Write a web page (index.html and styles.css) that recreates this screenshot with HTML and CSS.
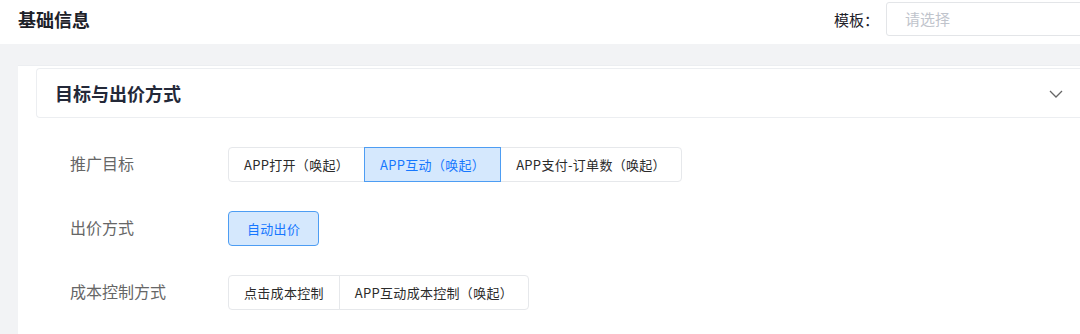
FILE: index.html
```html
<!DOCTYPE html>
<html lang="zh-CN">
<head>
  <meta charset="UTF-8">
  <meta name="viewport" content="width=device-width, initial-scale=1">
  <title>基础信息</title>
  <link rel="stylesheet" href="styles.css">
</head>
<body>

  <!-- 顶部栏 -->
  <div class="topbar">
    <div class="page-title">基础信息</div>
    <div class="template">
      <span class="template-label">模板：</span>
      <div class="select">请选择</div>
    </div>
  </div>

  <div class="main">
    <div class="card">
      <div class="panel-header">
        <span class="panel-title">目标与出价方式</span>
        <svg class="chevron" width="14" height="8" viewBox="0 0 14 8">
          <polyline points="1,1 7,7 13,1" fill="none" stroke="#666" stroke-width="1.3"/>
        </svg>
      </div>

      <div class="form">
        <div class="form-row">
          <div class="form-label">推广目标</div>
          <div class="seg">
            <div class="seg-btn">APP打开（唤起）</div>
            <div class="seg-btn active">APP互动（唤起）</div>
            <div class="seg-btn">APP支付-订单数（唤起）</div>
          </div>
        </div>
        <div class="form-row">
          <div class="form-label">出价方式</div>
          <div class="seg">
            <div class="seg-btn single active">自动出价</div>
          </div>
        </div>
        <div class="form-row">
          <div class="form-label">成本控制方式</div>
          <div class="seg">
            <div class="seg-btn">点击成本控制</div>
            <div class="seg-btn">APP互动成本控制（唤起）</div>
          </div>
        </div>
      </div>
    </div>
  </div>

</body>
</html>
```

FILE: styles.css
```css
html, body {
  overflow: hidden;
}
body {
  margin: 0;
  background: #f2f3f5;
  font-family: "Noto Sans CJK SC", "Noto Sans", sans-serif;
  color: #333;
}

/* top bar */
.topbar {
  display: flex;
  align-items: center;
  justify-content: space-between;
  background: #fff;
  padding: 2px 0 8px 18px;
}
.page-title {
  font-size: 18px;
  font-weight: bold;
  color: #1d2129;
  line-height: 34px;
}
.template {
  display: flex;
  align-items: center;
  margin-right: -12px;
}
.template-label {
  font-size: 15px;
  color: #1d2129;
  margin-right: 7px;
}
.select {
  width: 186px;
  height: 32px;
  line-height: 32px;
  border: 1px solid #e3e5e8;
  border-radius: 3px;
  padding-left: 18px;
  font-size: 15px;
  color: #c0c4cc;
}

/* card */
.main {
  padding: 21px 0 0 18px;
}
.card {
  background: #fff;
  border-top: 1px solid #eceef1;
  margin-right: -20px;
  padding: 2px 0 24px 18px;
}
.panel-header {
  display: flex;
  align-items: center;
  justify-content: space-between;
  height: 48px;
  border: 1px solid #eceef1;
  border-right: none;
  border-radius: 4px 0 0 4px;
  padding: 0 37px 0 18px;
}
.panel-title {
  font-size: 18px;
  font-weight: bold;
  color: #232838;
}
.chevron {
  margin-top: 2px;
}

/* form rows */
.form {
  padding: 29px 0 0 34px;
}
.form-row {
  display: flex;
  align-items: center;
  height: 35px;
  margin-bottom: 29px;
}
.form-row:last-child {
  margin-bottom: 0;
}
.form-label {
  width: 158px;
  font-size: 16px;
  line-height: 20px;
  color: #666;
  margin-top: -3px;
}
.seg {
  display: flex;
}
.seg-btn {
  position: relative;
  height: 33px;
  line-height: 33px;
  padding: 0 15px;
  border: 1px solid #e6e8eb;
  margin-left: -1px;
  font-size: 13px;
  letter-spacing: 0.3px;
  color: #2b2b2b;
  white-space: nowrap;
}
.seg-btn:first-child {
  margin-left: 0;
  border-radius: 4px 0 0 4px;
}
.seg-btn:last-child {
  border-radius: 0 4px 4px 0;
}
.seg-btn.single {
  border-radius: 4px;
  padding: 0 18px;
}
.seg-btn.active {
  z-index: 1;
  background: #d5e8fd;
  border-color: #4d9df3;
  color: #1677ff;
}
```
